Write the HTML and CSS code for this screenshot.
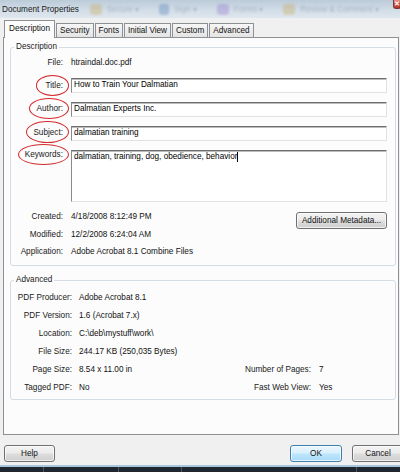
FILE: index.html
```html
<!DOCTYPE html>
<html>
<head>
<meta charset="utf-8">
<title>Document Properties</title>
<link rel="stylesheet" href="styles.css">
</head>
<body>
<div class="window">
  <div class="titlebar">
    <span class="title">Document Properties</span>
    <div class="ghost">
      <span class="gicon gi-yellow"></span><span class="gtext">Secure ▾</span>
      <span class="gicon gi-blue"></span><span class="gtext">Sign ▾</span>
      <span class="gicon gi-purple"></span><span class="gtext">Forms ▾</span>
      <span class="gicon gi-yellow"></span><span class="gtext">Review &amp; Comment ▾</span>
    </div>
    <div class="close">✕</div>
  </div>

  <div class="tabs">
    <div class="tab active">Description</div>
    <div class="tab">Security</div>
    <div class="tab">Fonts</div>
    <div class="tab">Initial View</div>
    <div class="tab">Custom</div>
    <div class="tab">Advanced</div>
  </div>

  <div class="panel">
    <fieldset class="group desc">
      <legend>Description</legend>
      <div class="row r-file">
        <div class="lbl">File:</div>
        <div class="val">htraindal.doc.pdf</div>
      </div>
      <div class="row r-title">
        <div class="lbl"><span class="ltext">Title:<span class="ring ring-title"></span></span></div>
        <div class="field">How to Train Your Dalmatian</div>
      </div>
      <div class="row r-author">
        <div class="lbl"><span class="ltext">Author:<span class="ring ring-author"></span></span></div>
        <div class="field">Dalmatian Experts Inc.</div>
      </div>
      <div class="row r-subject">
        <div class="lbl"><span class="ltext">Subject:<span class="ring ring-subject"></span></span></div>
        <div class="field">dalmatian training</div>
      </div>
      <div class="row r-keywords">
        <div class="lbl kw"><span class="ltext">Keywords:<span class="ring ring-keywords"></span></span></div>
        <div class="field area">dalmatian, training, dog, obedience, behavior<span class="caret"></span></div>
      </div>
      <div class="row r-created">
        <div class="lbl">Created:</div>
        <div class="val grow">4/18/2008 8:12:49 PM</div>
        <div class="btn meta">Additional Metadata...</div>
      </div>
      <div class="row r-modified">
        <div class="lbl">Modified:</div>
        <div class="val">12/2/2008 6:24:04 AM</div>
      </div>
      <div class="row r-app">
        <div class="lbl">Application:</div>
        <div class="val">Adobe Acrobat 8.1 Combine Files</div>
      </div>
    </fieldset>

    <fieldset class="group adv">
      <legend>Advanced</legend>
      <div class="advgrid">
        <div class="albl">PDF Producer:</div><div class="aval">Adobe Acrobat 8.1</div><div></div><div></div>
        <div class="albl">PDF Version:</div><div class="aval">1.6 (Acrobat 7.x)</div><div></div><div></div>
        <div class="albl">Location:</div><div class="aval">C:\deb\mystuff\work\</div><div></div><div></div>
        <div class="albl">File Size:</div><div class="aval">244.17 KB (250,035 Bytes)</div><div></div><div></div>
        <div class="albl">Page Size:</div><div class="aval">8.54 x 11.00 in</div><div class="albl r">Number of Pages:</div><div class="aval">7</div>
        <div class="albl">Tagged PDF:</div><div class="aval">No</div><div class="albl r">Fast Web View:</div><div class="aval">Yes</div>
      </div>
    </fieldset>
  </div>

  <div class="btnrow">
    <div class="btn help">Help</div>
    <div class="btn ok">OK</div>
    <div class="btn cancel">Cancel</div>
  </div>

  <div class="taskbar">
    <span class="tb-seg s1"></span><span class="tb-seg s2"></span><span class="tb-seg s3"></span><span class="tb-seg s4"></span>
  </div>
</div>
</body>
</html>
```

FILE: styles.css
```css
* { box-sizing: border-box; }
html, body {
  margin: 0;
  padding: 0;
}
body {
  width: 400px;
  height: 472px;
  overflow: hidden;
  background: #f0f0f0;
  font-family: "Liberation Sans", Arial, sans-serif;
  font-size: 8.2px;
  color: #111;
}
.window {
  display: flex;
  flex-direction: column;
  height: 472px;
  width: 400px;
}

/* title bar */
.titlebar {
  height: 18px;
  flex: none;
  display: flex;
  align-items: center;
  background: linear-gradient(#bccbd9, #d3dee8 60%, #dfe7ef);
  overflow: hidden;
}
.title {
  padding-left: 2px;
  color: #1a1a1a;
  white-space: nowrap;
}
.ghost {
  display: flex;
  align-items: center;
  margin-left: 5px;
  filter: blur(1.2px);
  opacity: 0.3;
  white-space: nowrap;
}
.gicon {
  width: 12px;
  height: 11px;
  border-radius: 3px;
  margin: 0 5px 0 6px;
}
.gi-yellow { background: #c9a040; }
.gi-blue { background: #3f6fae; width: 10px; }
.gi-purple { background: #8a66c8; }
.gtext {
  color: #4e6479;
  margin-right: 14px;
}
.close {
  margin-left: auto;
  align-self: flex-start;
  width: 19px;
  height: 9px;
  margin-right: 1px;
  background: linear-gradient(#e6928a, #c8493a 55%, #b63a2c);
  border: 1px solid #7a3a32;
  border-top: none;
  border-radius: 0 0 3px 3px;
  color: #fff;
  font-size: 7px;
  font-weight: bold;
  line-height: 8px;
  text-align: center;
}

/* tabs */
.tabs {
  height: 19px;
  flex: none;
  display: flex;
  align-items: flex-end;
  padding-left: 4px;
}
.tab {
  height: 14px;
  line-height: 13px;
  padding: 0 3px;
  border: 1px solid #8d9095;
  border-bottom: none;
  margin-left: 1px;
  background: linear-gradient(#f6f6f6, #e4e4e4);
  white-space: nowrap;
}
.tab.active {
  margin-left: 0;
  padding: 0 4px;
  height: 18px;
  line-height: 15px;
  margin-bottom: -1px;
  position: relative;
  z-index: 1;
  background: #fcfcfc;
}

/* panel */
.panel {
  height: 398px;
  flex: none;
  margin: 0 1px 0 3px;
  border: 1px solid #8d9095;
  background: #fcfcfc;
  padding: 0 2px 0 6px;
}
.group {
  margin: 0;
  padding: 0;
  border: 1px solid #d5dde3;
  border-radius: 3px;
  min-width: 0;
}
.group legend {
  margin-left: 3px;
  padding: 0 2px;
  line-height: 10px;
  color: #1a1a1a;
}
.desc {
  margin-top: 4px;
  padding: 0 8px 4px 0;
}
.adv {
  margin-top: 9px;
  padding: 3px 0 3px 0;
}

.row {
  display: flex;
  align-items: center;
}
.r-file { height: 22px; }
.r-title { height: 23px; }
.r-author { height: 24px; }
.r-subject { height: 24px; }
.r-keywords { height: 62px; align-items: flex-start; }
.r-created { height: 20px; }
.r-modified { height: 16px; }
.r-app { height: 18px; }

.lbl {
  width: 52px;
  flex: none;
  text-align: right;
  margin-right: 8px;
  color: #1a1a1a;
  white-space: nowrap;
  line-height: 10px;
}
.lbl.kw { padding-top: 5px; }
.ltext {
  display: inline-block;
  position: relative;
  line-height: 10px;
}
.ring {
  position: absolute;
  border: 1.5px solid #d42a2c;
  border-radius: 50%;
}
.ring-title { left: -10px; right: -6px; top: -6px; bottom: -5px; }
.ring-author { left: -8px; right: -6px; top: -6px; bottom: -5px; }
.ring-subject { left: -7px; right: -6px; top: -7px; bottom: -5px; }
.ring-keywords { left: -7px; right: -6px; top: -6px; bottom: -5px; }

.val {
  white-space: nowrap;
  line-height: 10px;
}
.val.grow { flex: 1; }

.field {
  flex: 1;
  height: 15px;
  line-height: 12px;
  padding-left: 2px;
  background: #fff;
  border: 1px solid;
  border-color: #6e6e6e #e2e2e2 #e2e2e2 #8a8a8a;
  box-shadow: inset 0 1px 0 #bdbdbd;
  white-space: nowrap;
  overflow: hidden;
  color: #000;
}
.field.area {
  height: 52px;
  margin-top: 5px;
  line-height: 10px;
  padding-top: 1px;
}
.caret {
  display: inline-block;
  width: 1px;
  height: 10px;
  background: #000;
  vertical-align: top;
}

/* buttons */
.btn {
  height: 17px;
  border: 1px solid #707070;
  border-radius: 3px;
  background: linear-gradient(#f3f3f3, #ebebeb 48%, #dddddd 52%, #cfcfcf);
  box-shadow: inset 0 0 0 1px rgba(255,255,255,0.7);
  text-align: center;
  line-height: 15px;
  color: #111;
  white-space: nowrap;
}
.meta {
  align-self: flex-start;
  margin-top: 5px;
  width: 91px;
  flex: none;
}

/* advanced grid */
.advgrid {
  display: grid;
  grid-template-columns: 68px 1fr 108px 76px;
  grid-auto-rows: 18px;
  align-items: center;
}
.albl {
  text-align: right;
  padding-right: 7px;
  color: #1a1a1a;
  white-space: nowrap;
}
.albl.r { padding-right: 8px; }
.aval { white-space: nowrap; }

/* bottom buttons */
.btnrow {
  flex: none;
  display: flex;
  margin-top: 10px;
  padding-left: 4px;
  height: 17px;
}
.help { width: 51px; }
.ok {
  width: 52px;
  margin-left: auto;
  border-color: #3c7fb1;
  background: linear-gradient(#eaf6fd, #d9f0fc 48%, #bee6fd 52%, #a7d9f5);
}
.cancel {
  width: 52px;
  margin-left: 10px;
  margin-right: -4px;
}

.taskbar {
  flex: none;
  margin-top: 3px;
  height: 7px;
  border-top: 2px solid #a8c6de;
  background: #1f2630;
  display: flex;
}
.tb-seg {
  height: 100%;
  border-right: 1px solid #4a5663;
}
.s1 { width: 44px; }
.s2 { width: 75px; }
.s3 { width: 63px; }
.s4 { width: 175px; }
```
